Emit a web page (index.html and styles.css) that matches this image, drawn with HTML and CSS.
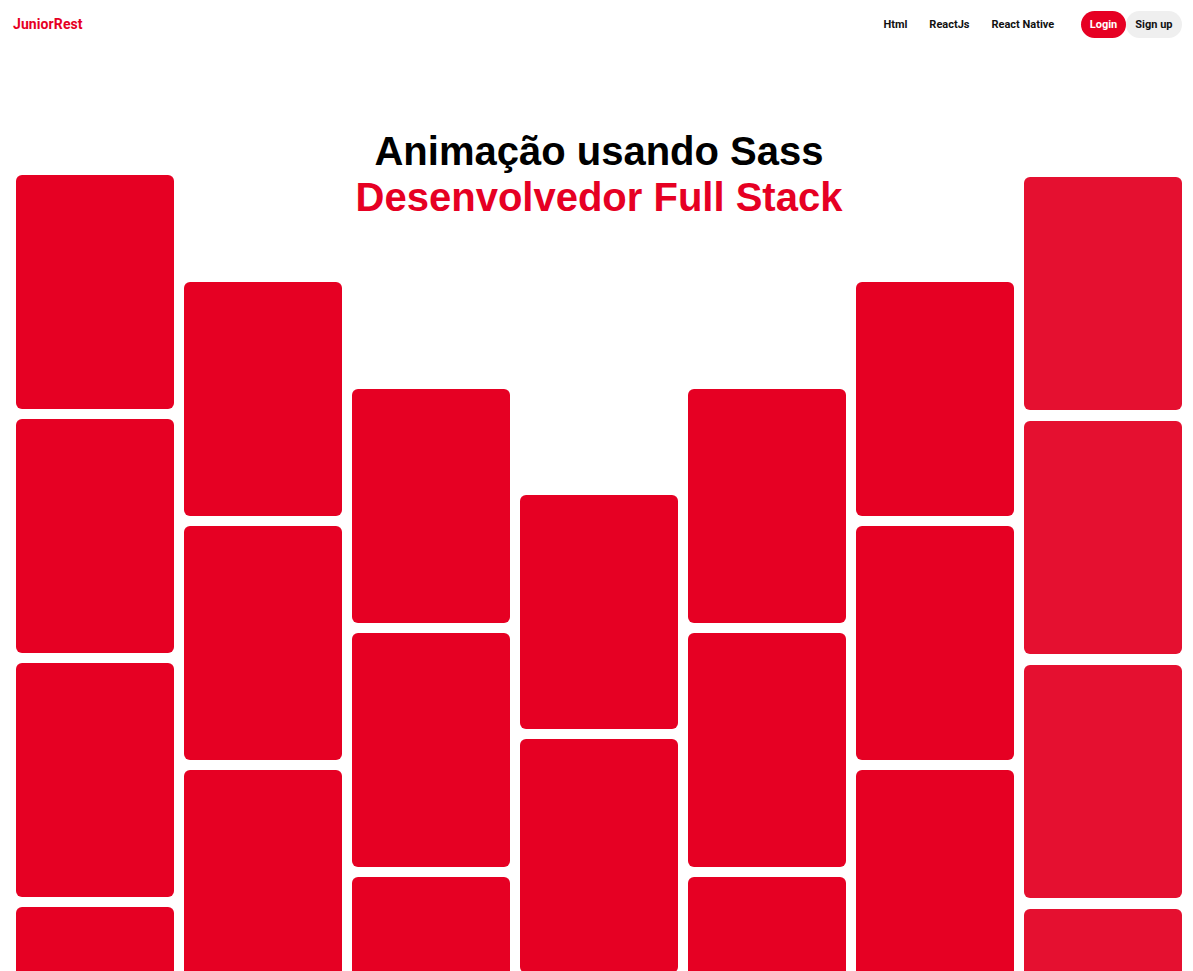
FILE: index.html
```html
<!DOCTYPE html>
<html lang="pt-BR">
<head>
<meta charset="utf-8">
<title>JuniorRest</title>
<link rel="stylesheet" href="styles.css">
</head>
<body>
<header class="topbar">
  <a class="logo" href="#">JuniorRest</a>
  <nav class="nav">
    <a class="nav-link" href="#">Html</a>
    <a class="nav-link" href="#">ReactJs</a>
    <a class="nav-link" href="#">React Native</a>
    <div class="auth">
      <a class="btn btn-login" href="#">Login</a>
      <a class="btn btn-signup" href="#">Sign up</a>
    </div>
  </nav>
</header>
<main class="stage">
  <div class="headline">
    <h1 class="title">Animação usando Sass</h1>
    <h2 class="subtitle">Desenvolvedor Full Stack</h2>
  </div>
  <section class="grid">
    <div class="col col-1"><div class="card"></div><div class="card"></div><div class="card"></div><div class="card"></div></div>
    <div class="col col-2"><div class="card"></div><div class="card"></div><div class="card"></div></div>
    <div class="col col-3"><div class="card"></div><div class="card"></div><div class="card"></div></div>
    <div class="col col-4"><div class="card"></div><div class="card"></div></div>
    <div class="col col-5"><div class="card"></div><div class="card"></div><div class="card"></div></div>
    <div class="col col-6"><div class="card"></div><div class="card"></div><div class="card"></div></div>
    <div class="col col-7 light"><div class="card"></div><div class="card"></div><div class="card"></div><div class="card"></div></div>
  </section>
</main>
</body>
</html>
```
FILE: styles.css
```css
* { box-sizing: border-box; }
html, body {
  margin: 0;
  padding: 0;
  background: #fff;
  font-family: Roboto, "Liberation Sans", Arial, sans-serif;
  overflow: hidden;
  height: 971px;
}
a { text-decoration: none; }

.topbar {
  height: 48px;
  display: flex;
  align-items: center;
  justify-content: space-between;
  padding: 0 11px 0 13px;
}
.logo {
  color: #e60023;
  font-weight: 700;
  font-size: 14px;
  letter-spacing: 0.1px;
}
.nav {
  display: flex;
  align-items: center;
}
.nav-link {
  color: #111;
  font-size: 11px;
  font-weight: 700;
  padding: 6px 11px;
}
.auth {
  display: flex;
  align-items: center;
  margin-left: 16px;
}
.btn {
  height: 27px;
  display: flex;
  align-items: center;
  border-radius: 14px;
  font-size: 11px;
  font-weight: 700;
  padding: 0 9px;
}
.btn-login { background: #e60023; color: #fff; padding: 0 8.5px; }
.btn-signup { background: #efefef; color: #111; padding: 0 9.5px; }

.stage {
  position: relative;
}
.headline {
  position: absolute;
  left: 5px;
  right: 0;
  top: 80px;
  text-align: center;
  z-index: 1;
  font-family: "Liberation Sans", Arial, sans-serif;
}
.title, .subtitle {
  margin: 0;
  font-size: 40px;
  font-weight: 700;
  line-height: 46px;
}
.title { color: #000; }
.subtitle { color: #e60023; }

.grid {
  display: flex;
  gap: 10px;
  padding: 0 0 0 16px;
}
.col {
  width: 158px;
  display: flex;
  flex-direction: column;
  gap: 10px;
  flex: none;
}
.col-1 { padding-top: 127px; }
.col-2 { padding-top: 234px; }
.col-3 { padding-top: 341px; }
.col-4 { padding-top: 447px; }
.col-5 { padding-top: 341px; }
.col-6 { padding-top: 234px; }
.col-7 { padding-top: 129px; }
.card {
  height: 234px;
  border-radius: 6px;
  background: #e60023;
  flex: none;
}
.col-7 .card { background: #e51030; height: 233px; margin-bottom: 1px; }
```
